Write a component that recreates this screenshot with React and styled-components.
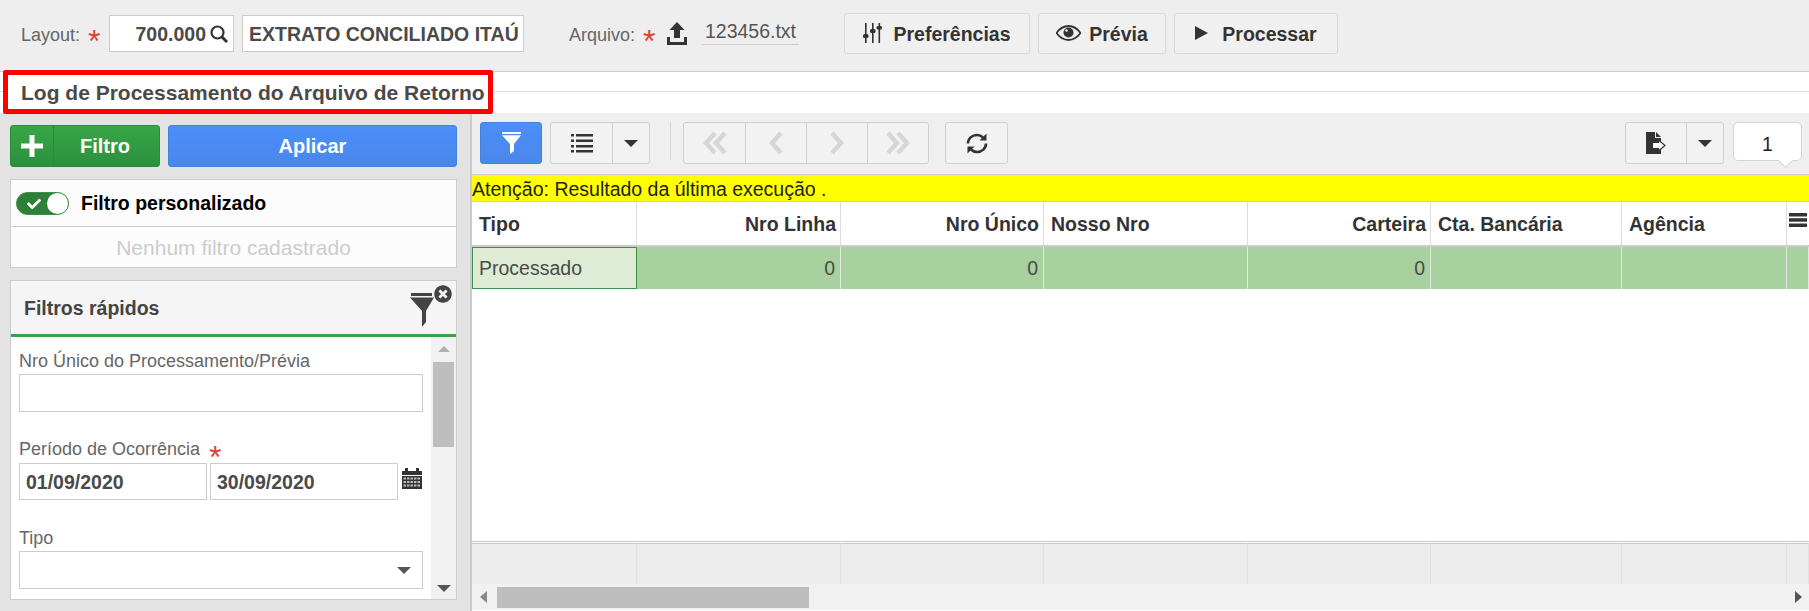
import React from 'react';
import styled, { createGlobalStyle } from 'styled-components';
import { FaCheck, FaTimesCircle } from 'react-icons/fa';

const Global = createGlobalStyle`
  html, body { margin: 0; padding: 0; height: 611px; overflow: hidden; background: #fff; }
  * { box-sizing: border-box; }
  body { font-family: "Liberation Sans", Arial, sans-serif; color: #444; }
`;

const Page = styled.div`display: flex; flex-direction: column; width: 1809px; height: 611px; position: relative;`;

const TopBar = styled.div`
  height: 72px; flex: none; display: flex; align-items: flex-start; background: #eee;
  border-bottom: 1px solid #ccc; padding: 13px 0 0 21px;
`;
const TopLabel = styled.span`font-size: 18px; color: #666; line-height: 20px; margin-top: 12px; width: ${p => p.$w}px; margin-left: ${p => p.$ml ?? 0}px; white-space: nowrap;`;
const Star = styled.span`font-size: 32px; line-height: 20px; color: #e0402f; margin-top: 18px; width: ${p => p.$w}px; font-weight: 400;`;
const TopInput = styled.div`
  height: 37px; margin-top: 2px; background: #fff; border: 1px solid #ccc; width: ${p => p.$w}px; margin-right: ${p => p.$mr ?? 0}px;
  display: flex; align-items: center; justify-content: ${p => p.$end ? 'flex-end' : 'flex-start'}; padding: 1px 5px 0 6px;
  font-size: 19.5px; font-weight: 700; color: #4a4a4a; gap: 4px; white-space: nowrap;
  svg { flex: none; }
`;
const UploadIcon = styled.svg`width: 20px; height: 23px; margin-top: 9px; flex: none; margin-right: 15px;`;
const FileName = styled.div`
  width: 97px; height: 32px; border-bottom: 1px solid #ccc; font-size: 19.5px; color: #555; text-align: center; line-height: 36px; margin-right: 45px; flex:none;
`;
const ActionRow = styled.div`display: flex; gap: 8px;`;
const ActionBtn = styled.div`
  height: 41px; width: ${p => p.$w}px; display: flex; align-items: center; justify-content: center; gap: ${p => p.$gap}px; padding-top: 2px;
  background: #f0f0f0; border: 1px solid #d8d8d8; border-radius: 3px; font-size: 19.5px; font-weight: 700; color: #333;
  svg { margin-top: -3px; }
`;

const TitleBar = styled.div`height: 41px; flex: none; background: #fff; display: flex; flex-direction: column;`;
const TitleLine = styled.div`height: 20px; border-bottom: 1px solid #ddd; flex: none;`;
const TitleBox = styled.div`
  position: absolute; left: 3px; top: 70px; width: 490px; height: 44px; border: 5px solid #f00; border-radius: 2px; background: #fff;
  font-size: 21px; font-weight: 700; color: #4a4a4a; padding-left: 13px; line-height: 35px; white-space: nowrap;
`;

const Main = styled.div`flex: 1; display: flex; min-height: 0;`;
const Sidebar = styled.div`
  width: 472px; flex: none; background: #e3e3e3; border-right: 2px solid #ccc; padding: 12px 13px 0 10px;
  display: flex; flex-direction: column;
`;
const SideButtons = styled.div`display: flex; gap: 8px; height: 42px; flex: none; margin-bottom: 12px;`;
const AddButton = styled.div`
  width: 150px; display: flex; align-items: stretch; background: linear-gradient(#37a748, #2c8f3d); border: 1px solid #2b8a3a; border-radius: 3px; color: #fff;
  font-size: 20px; font-weight: 700;
`;
const AddIcon = styled.div`width: 43px; border-right: 1px solid #2b8a3a; display: flex; align-items: center; justify-content: center; svg { width: 22px; height: 22px; }`;
const AddText = styled.div`flex: 1; display: flex; align-items: center; justify-content: center; padding-right: 3px;`;
const ApplyButton = styled.div`
  flex: 1; display: flex; align-items: center; justify-content: center; background: linear-gradient(#4b8ffa, #4a87ea); border: 1px solid #4480e0; border-radius: 3px; color: #fff;
  font-size: 20px; font-weight: 700;
`;
const CustomPanel = styled.div`height: 89px; flex: none; background: #fcfcfc; border: 1px solid #ccc; margin-bottom: 12px; display: flex; flex-direction: column;`;
const CustomTop = styled.div`height: 47px; flex: none; margin: 0 0 0 1px; border-bottom: 1px solid #ccc; display: flex; align-items: center; padding: 1px 0 0 4px; gap: 12px; font-size: 19.5px; font-weight: 700; color: #000;`;
const Toggle = styled.div`
  width: 53px; height: 23px; border-radius: 12px; background: #2c8038; border: 1px solid #3c9048; position: relative; display: flex; align-items: center; padding-left: 10px; color: #fff;
  &::after { content: ''; position: absolute; right: 0; top: 0; width: 21px; height: 21px; border-radius: 50%; background: #fff; }
`;
const EmptyNote = styled.div`flex: 1; display: flex; align-items: center; justify-content: center; font-size: 21px; color: #ccc; padding-top: 2px;`;
const QuickPanel = styled.div`height: 320px; flex: none; border: 1px solid #ccc; background: #fff; display: flex; flex-direction: column;`;
const QuickHead = styled.div`
  height: 56px; flex: none; background: #f5f5f5; border-bottom: 3px solid #38a045; display: flex; align-items: center; padding: 2px 0 0 13px;
  font-size: 19.5px; font-weight: 700; color: #444; position: relative;
`;
const ClearFilter = styled.div`position: absolute; left: 399px; top: 4px; width: 48px; height: 40px; color: #444;`;
const FunnelWrap = styled.div`position: absolute; left: 0; top: 8px; svg { display: block; }`;
const CloseWrap = styled.div`position: absolute; left: 24px; top: 0; width: 18px; height: 18px; background: #f5f5f5; border-radius: 50%; svg { display: block; }`;
const QuickBody = styled.div`flex: 1; display: flex; min-height: 0;`;
const Form = styled.div`flex: 1; padding: 13px 8px 0 8px; display: flex; flex-direction: column;`;
const FieldLabel = styled.div`font-size: 18px; line-height: 22px; color: #666; height: 22px; margin-bottom: ${p => p.$mb}px; display: flex; gap: 9px;`;
const LabelStar = styled.span`font-size: 32px; color: #e0402f; line-height: 38px;`;
const TextBox = styled.div`height: 38px; border: 1px solid #ccc; background: #fff; margin-bottom: ${p => p.$mb}px; display: flex; align-items: center; justify-content: flex-end; padding-right: 11px;`;
const DateRow = styled.div`display: flex; gap: 3px; margin-bottom: 27px; align-items: center;`;
const DateBox = styled.div`width: 188px; height: 37px; border: 1px solid #ccc; padding-left: 6px; line-height: 36px; font-size: 19.5px; font-weight: 700; color: #4a4a4a;`;
const DownTri = styled.div`width: 0; height: 0; border-left: 7px solid transparent; border-right: 7px solid transparent; border-top: 7px solid ${p => p.$c || '#555'};`;
const VScroll = styled.div`width: 25px; flex: none; background: #f1f1f1; display: flex; flex-direction: column; align-items: center; padding-top: 9px;`;
const UpTri = styled.div`width: 0; height: 0; border-left: 6px solid transparent; border-right: 6px solid transparent; border-bottom: 6px solid #b0b0b0;`;
const VThumb = styled.div`width: 21px; height: 85px; background: #bebebe; margin-top: 10px;`;
const VDown = styled.div`margin-top: auto; margin-bottom: 7px;`;

const Content = styled.div`flex: 1; display: flex; flex-direction: column; min-width: 0;`;
const Toolbar = styled.div`height: 61px; flex: none; background: #efefef; display: flex; padding: 9px 7px 0 8px; gap: 8px; align-items: flex-start;`;
const BtnGroup = styled.div`display: flex; height: 42px; border: 1px solid #d0d0d0; border-radius: 3px; background: #f2f2f2; margin-left: ${p => p.$ml ?? 0}px;`;
const GroupCell = styled.div`
  width: ${p => p.$w}px; display: flex; align-items: center; justify-content: center;
  & + & { border-left: 1px solid #d0d0d0; }
`;
const FilterBtn = styled.div`width: 62px; height: 42px; background: linear-gradient(#4b8ffa, #4a87ea); border: 1px solid #4480e0; border-radius: 3px; display: flex; align-items: center; justify-content: center;`;
const Sep = styled.div`width: 1px; height: 38px; background: #d4d4d4; margin: 0 4px 0 12px;`;
const Spacer = styled.div`flex: 1;`;
const PageBox = styled.div`
  width: 69px; height: 39px; background: #fff; border: 1px solid #d4d4d4; border-radius: 5px; position: relative; text-align: center; font-size: 19.5px; color: #222; line-height: 42px; margin-left: 1px;
  &::after { content: ''; position: absolute; right: 10px; bottom: -6px; width: 10px; height: 10px; background: #fff; transform: rotate(45deg); border-right: 1px solid #d4d4d4; border-bottom: 1px solid #d4d4d4; }
`;
const Notice = styled.div`height: 28px; flex: none; background: #ff0; border-top: 1px solid #ccc; border-bottom: 1px solid #ccc; font-size: 19.5px; line-height: 28px; color: #222; white-space: nowrap;`;
const cols = '165px 204px 203px 204px 183px 191px 165px 22px';
const GridHead = styled.div`display: grid; grid-template-columns: ${cols}; height: 45px; flex: none; background: #fff; border-bottom: 2px solid #ccc;`;
const HeadCell = styled.div`
  font-size: 19.5px; font-weight: 700; color: #333; display: flex; align-items: center; padding: 2px 4px 0 7px; justify-content: ${p => p.$right ? 'flex-end' : 'flex-start'};
  border-right: 1px solid #ddd; white-space: nowrap; &:last-child { border-right: 0; padding: 0 2px 8px 2px; }
`;
const GridRow = styled.div`display: grid; grid-template-columns: ${cols}; height: 42px; flex: none; background: #a9d1a0;`;
const RowCell = styled.div`
  font-size: 19.5px; color: #4a4a4a; display: flex; align-items: center; padding: 0 5px 0 7px; justify-content: ${p => p.$right ? 'flex-end' : 'flex-start'};
  border-right: 1px solid #dfe9dc;
`;
const ActiveCell = styled(RowCell)`background: #deecd5; border: 1px solid #3f8f4a; padding-left: 6px;`;
const GridEmpty = styled.div`flex: 1; background: #fff;`;
const GridFoot = styled.div`
  display: grid; grid-template-columns: ${cols}; height: 43px; flex: none; background: #ececec; border-top: 1px solid #c4c6c8; position: relative;
  &::before { content: ''; position: absolute; left: 0; right: 0; top: 0; height: 1px; background: #fff; }
`;
const FootCell = styled.div`border-right: 1px solid #e2e2e2; border-top: 1px solid #c4c6c8; margin-top: 1px;`;
const HScroll = styled.div`height: 26px; flex: none; background: #f1f1f1; display: flex; align-items: center; padding: 0 7px 0 8px; margin-bottom: 1px;`;
const LeftTri = styled.div`width: 0; height: 0; border-top: 6px solid transparent; border-bottom: 6px solid transparent; border-right: 7px solid #888;`;
const RightTri = styled.div`width: 0; height: 0; border-top: 6px solid transparent; border-bottom: 6px solid transparent; border-left: 7px solid #555; margin-left: auto;`;
const HThumb = styled.div`width: 312px; height: 21px; background: #bebebe; margin-left: 10px;`;

const SearchIcon = () => (
  <svg width="18" height="18" viewBox="0 0 18 18" fill="none" stroke="#333">
    <circle cx="7.500" cy="7.500" r="6" strokeWidth="2.200" />
    <path d="M12 12L17 17" strokeWidth="3" />
  </svg>
);
const Sliders = () => (
  <svg width="19" height="20" viewBox="0 0 19 20" fill="#333">
    <rect x="2" y="0" width="1.600" height="20" /><rect x="0" y="11" width="5.500" height="4" rx="1.500" />
    <rect x="9" y="0" width="1.600" height="20" /><rect x="7" y="6" width="5.500" height="4" rx="1.500" />
    <rect x="15.500" y="0" width="1.600" height="20" /><rect x="13.500" y="3" width="5.500" height="3.500" rx="1.500" />
  </svg>
);
const EyeIcon = () => (
  <svg width="25" height="16" viewBox="0 0 25 16">
    <path d="M0.500 8C4 3 8 1 12.500 1S21 3 24.500 8C21 13 17 15 12.500 15S4 13 0.500 8Z" fill="none" stroke="#333" strokeWidth="1.800" />
    <circle cx="12.500" cy="7.500" r="5" fill="#333" />
    <circle cx="10.500" cy="5.500" r="1.300" fill="#eee" />
  </svg>
);
const PlayIcon = () => <svg width="13" height="14" viewBox="0 0 13 14" fill="#333"><path d="M0 0L13 7L0 14Z" /></svg>;
const FilterGlyph = () => (
  <svg width="19" height="22" viewBox="0 0 19 22" fill="#fff">
    <rect x="0" y="0" width="19" height="2" />
    <path d="M0 3.200H19L12 12V19L8 22V12Z" />
  </svg>
);
const ListIcon = () => (
  <svg width="22" height="21" viewBox="0 0 22 21" fill="#333">
    {[1, 6.500, 12, 17].map(y => <g key={y}><rect x="0" y={y} width="3" height="2.500" /><rect x="5" y={y} width="17" height="2.500" /></g>)}
  </svg>
);
const Chevrons = ({ dir, double }) => (
  <svg width="24" height="24" viewBox="0 0 24 24" fill="none" stroke="#d6d6d6" strokeWidth="4.500" style={dir === 'right' ? { transform: 'scaleX(-1)' } : undefined}>
    {double
      ? <><path d="M12 2L3 12L12 22" /><path d="M22 2L13 12L22 22" /></>
      : <path d="M17 2L8 12L17 22" />}
  </svg>
);
const ExportIcon = () => (
  <svg width="20" height="22" viewBox="0 0 20 22">
    <path d="M0 0H9V6H15V22H0Z" fill="#333" />
    <path d="M10 0L15 5H10Z" fill="#333" />
    <path d="M6.500 10.500H12.500V8L19 13.500L12.500 19V16.500H6.500Z" fill="#fff" stroke="#333" strokeWidth="1.200" />
  </svg>
);
const Refresh = () => (
  <svg width="22" height="23" viewBox="0 0 22 23" fill="none" stroke="#333" strokeWidth="2.600">
    <path d="M2 11.500C2 6.500 6 3 11 3C13.500 3 15.500 4 17 5.500" />
    <path d="M20 11.500C20 16.500 16 20 11 20C8.500 20 6.500 19 5 17.500" />
    <path d="M20.500 1.500V8.500H13.500Z" fill="#333" stroke="none" />
    <path d="M1.500 21.500V14.500H8.500Z" fill="#333" stroke="none" />
  </svg>
);
const BarsIcon = () => (
  <svg width="18" height="14" viewBox="0 0 18 14" fill="#333">
    <rect width="18" height="3.500" /><rect y="5.200" width="18" height="3.500" /><rect y="10.500" width="18" height="3.500" />
  </svg>
);
const Funnel = () => (
  <svg width="24" height="34" viewBox="0 0 24 34" fill="#444">
    <rect x="1" y="0" width="21" height="3" />
    <path d="M0 4.500H24L16 18V29L12 34V18Z" />
  </svg>
);
const CalendarIcon = () => (
  <svg width="20" height="21" viewBox="0 0 20 21" style={{ marginLeft: 1, marginTop: -7 }}>
    <path d="M0 3H3V0H6V3H14V0H17V3H20V7H0Z" fill="#333" />
    <path d="M0 8H20V21H0Z" fill="#333" />
    {[9.500, 13, 16.500].map(y => [1.500, 5, 8.500, 12, 15.500].map(x => <rect key={`${x}-${y}`} x={x} y={y} width="2.500" height="2" fill="#bbb" />))}
  </svg>
);

const headers = [['Tipo', 0], ['Nro Linha', 1], ['Nro Único', 1], ['Nosso Nro', 0], ['Carteira', 1], ['Cta. Bancária', 0], ['Agência', 0]];

export default function App() {
  return (
    <Page>
      <Global />
      <TopBar>
        <TopLabel $w={67}>Layout:</TopLabel>
        <Star $w={21}>*</Star>
        <TopInput $w={125} $mr={8} $end>700.000 <SearchIcon /></TopInput>
        <TopInput $w={282}>EXTRATO CONCILIADO ITAÚ</TopInput>
        <TopLabel $w={74} $ml={45}>Arquivo:</TopLabel>
        <Star $w={24}>*</Star>
        <UploadIcon viewBox="0 0 20 23" fill="#333"><path d="M10 0L17.500 8H13V16H7V8H2.500Z" /><path d="M0 15H3V20H17V15H20V23H0Z" /></UploadIcon>
        <FileName>123456.txt</FileName>
        <ActionRow>
          <ActionBtn $w={186} $gap={11}><Sliders />Preferências</ActionBtn>
          <ActionBtn $w={128} $gap={8}><EyeIcon />Prévia</ActionBtn>
          <ActionBtn $w={164} $gap={14}><PlayIcon />Processar</ActionBtn>
        </ActionRow>
      </TopBar>
      <TitleBar><TitleLine /></TitleBar>
      <TitleBox>Log de Processamento do Arquivo de Retorno</TitleBox>
      <Main>
        <Sidebar>
          <SideButtons>
            <AddButton>
              <AddIcon><svg viewBox="0 0 22 22" fill="#fff"><rect x="8.500" y="0" width="5" height="22" /><rect x="0" y="8.500" width="22" height="5" /></svg></AddIcon>
              <AddText>Filtro</AddText>
            </AddButton>
            <ApplyButton>Aplicar</ApplyButton>
          </SideButtons>
          <CustomPanel>
            <CustomTop><Toggle><FaCheck size={14} /></Toggle>Filtro personalizado</CustomTop>
            <EmptyNote>Nenhum filtro cadastrado</EmptyNote>
          </CustomPanel>
          <QuickPanel>
            <QuickHead>
              Filtros rápidos
              <ClearFilter>
                <FunnelWrap><Funnel /></FunnelWrap>
                <CloseWrap><FaTimesCircle size={18} /></CloseWrap>
              </ClearFilter>
            </QuickHead>
            <QuickBody>
              <Form>
                <FieldLabel $mb={2}>Nro Único do Processamento/Prévia</FieldLabel>
                <TextBox $mb={26} />
                <FieldLabel $mb={3}>Período de Ocorrência <LabelStar>*</LabelStar></FieldLabel>
                <DateRow>
                  <DateBox>01/09/2020</DateBox>
                  <DateBox>30/09/2020</DateBox>
                  <CalendarIcon />
                </DateRow>
                <FieldLabel $mb={2}>Tipo</FieldLabel>
                <TextBox $mb={0}><DownTri /></TextBox>
              </Form>
              <VScroll>
                <UpTri />
                <VThumb />
                <VDown><DownTri $c="#555" /></VDown>
              </VScroll>
            </QuickBody>
          </QuickPanel>
        </Sidebar>
        <Content>
          <Toolbar>
            <FilterBtn><FilterGlyph /></FilterBtn>
            <BtnGroup>
              <GroupCell $w={61}><ListIcon /></GroupCell>
              <GroupCell $w={37}><DownTri $c="#333" /></GroupCell>
            </BtnGroup>
            <Sep />
            <BtnGroup>
              <GroupCell $w={61}><Chevrons double /></GroupCell>
              <GroupCell $w={61}><Chevrons /></GroupCell>
              <GroupCell $w={61}><Chevrons dir="right" /></GroupCell>
              <GroupCell $w={61}><Chevrons dir="right" double /></GroupCell>
            </BtnGroup>
            <BtnGroup $ml={8}><GroupCell $w={61}><Refresh /></GroupCell></BtnGroup>
            <Spacer />
            <BtnGroup>
              <GroupCell $w={60}><ExportIcon /></GroupCell>
              <GroupCell $w={37}><DownTri $c="#333" /></GroupCell>
            </BtnGroup>
            <PageBox>1</PageBox>
          </Toolbar>
          <Notice>Atenção: Resultado da última execução .</Notice>
          <GridHead>
            {headers.map(([h, r]) => <HeadCell key={h} $right={r}>{h}</HeadCell>)}
            <HeadCell><BarsIcon /></HeadCell>
          </GridHead>
          <GridRow>
            <ActiveCell>Processado</ActiveCell>
            <RowCell $right>0</RowCell>
            <RowCell $right>0</RowCell>
            <RowCell />
            <RowCell $right>0</RowCell>
            <RowCell />
            <RowCell />
            <RowCell />
          </GridRow>
          <GridEmpty />
          <GridFoot>
            {cols.split(' ').map((c, i) => <FootCell key={i} />)}
          </GridFoot>
          <HScroll>
            <LeftTri />
            <HThumb />
            <RightTri />
          </HScroll>
        </Content>
      </Main>
    </Page>
  );
}
